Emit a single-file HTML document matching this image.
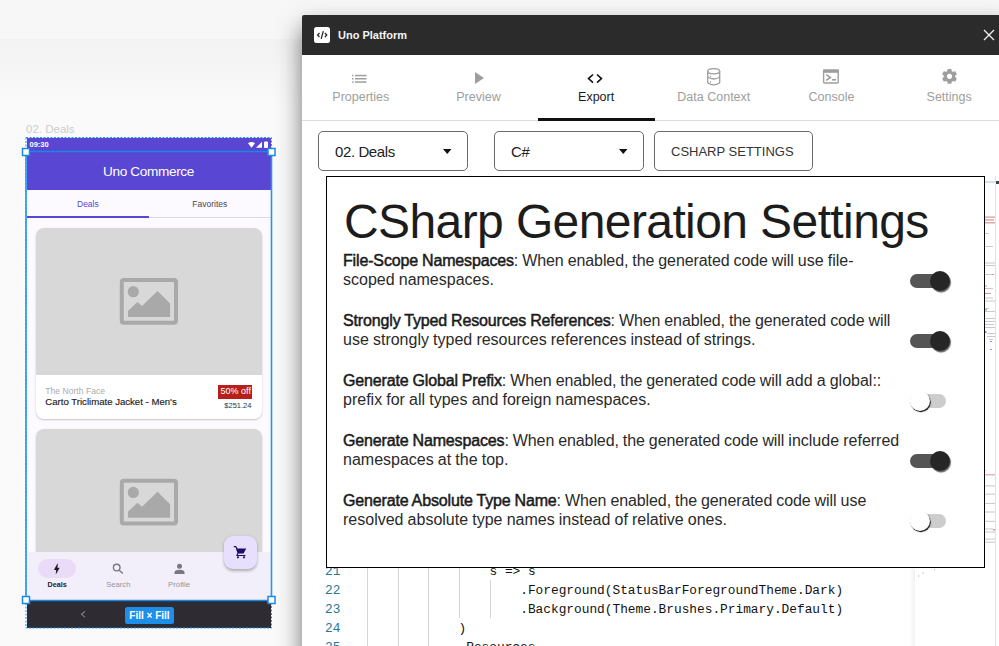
<!DOCTYPE html>
<html><head><meta charset="utf-8">
<style>
*{margin:0;padding:0;box-sizing:border-box}
html,body{width:999px;height:646px;overflow:hidden;background:#fafafa;font-family:"Liberation Sans",sans-serif;position:relative}
.a{position:absolute}
.t{position:absolute;white-space:nowrap;line-height:1}
svg{position:absolute;overflow:visible}
#bgtop{left:0;top:0;width:999px;height:39px;background:#f7f7f7}
#bgband{left:0;top:39px;width:999px;height:65px;background:linear-gradient(#f2f2f2,#fafafa)}
/* phone */
#phone{left:27px;top:138px;width:244px;height:490px;background:#fcfaff;overflow:hidden}
.card{border-radius:8px;overflow:hidden;background:#fff;box-shadow:0 1px 2px rgba(0,0,0,.22)}
/* dialog */
#dlg{left:302px;top:15px;width:710px;height:660px;background:#fff;border-radius:2px 0 0 0;box-shadow:0 12px 24px rgba(0,0,0,.55)}
.tablbl{top:91.2px;font-size:12.5px;color:#9e9e9e;width:117.67px;text-align:center}
.dd{top:131px;height:40px;border:1px solid #6a6a6a;border-radius:5px;background:#fff}
#popup{left:326px;top:176px;width:659px;height:392px;background:#fff;border:1px solid #000}
#title{left:344px;top:197.8px;font-size:48px;letter-spacing:-0.6px;color:#1c1c1c}
.row{left:343px;font-size:16px;color:#2a2a2a;line-height:18.75px;white-space:nowrap;letter-spacing:0px;word-spacing:-0.3px}
.we{letter-spacing:-0.1px}
.row b{font-weight:normal;color:#1a1a1a;letter-spacing:-0.15px;word-spacing:-0.3px;-webkit-text-stroke:0.5px #1a1a1a}
.tg{width:42px;height:22px}
.trk{left:0;top:3px;width:36px;height:14px;border-radius:7px}
.thm{top:0;width:20px;height:20px;border-radius:50%}
.on .trk{background:#555}
.on .thm{left:20px;background:#262626;box-shadow:1px 1.5px 1px 0 rgba(0,0,0,.6)}
.off .trk{background:#cdcdcd}
.off .thm{left:0;background:#fff;box-shadow:0.8px 1.2px 0.8px 0 rgba(0,0,0,.9)}
.code{position:absolute;white-space:pre;font-family:"Liberation Mono",monospace;font-size:12.82px;color:#111;line-height:1}
.ln{color:#237893}
.guide{position:absolute;width:1px;background:#d6d6d6}
</style></head><body>
<div class="a" id="bgtop"></div>
<div class="a" id="bgband"></div>

<!-- ============ phone ============ -->
<div class="t" style="left:26px;top:124.3px;font-size:11.5px;color:#cdcdcd">02. Deals</div>
<div class="a" id="phone">
  <div class="a" style="left:0;top:0;width:244px;height:52px;background:#5946d2"></div>
  <div class="a" style="left:0;top:52px;width:244px;height:28px;background:#fcfaff;border-bottom:1px solid #dcd9e2"></div>
  <div class="a" style="left:0;top:78px;width:122px;height:2px;background:#5946d2"></div>
  <div class="a card" style="left:9px;top:90px;width:226px;height:191px">
    <div class="a" style="left:0;top:0;width:226px;height:147px;background:#d8d8d8"></div>
  </div>
  <div class="a card" style="left:9px;top:290.75px;width:226px;height:191px">
    <div class="a" style="left:0;top:0;width:226px;height:147px;background:#d8d8d8"></div>
  </div>
  <div class="a" style="left:0;top:414px;width:244px;height:48px;background:#f3effa"></div>
  <div class="a" style="left:11px;top:421px;width:38px;height:19px;border-radius:10px;background:#eadcf9"></div>
  <div class="a" style="left:197px;top:397.5px;width:33px;height:33px;border-radius:9px;background:#e7e0fc;box-shadow:0 1.5px 3px rgba(0,0,0,.28)"></div>
  <div class="a" style="left:0;top:462px;width:244px;height:28px;background:#2e2b33"></div>
  <div class="a" style="left:98px;top:469px;width:48.5px;height:16.5px;background:#1e8fe8;border-radius:2.5px"></div>
</div>
<!-- phone texts -->
<div class="t" style="left:29.5px;top:140.9px;font-size:7.5px;color:#fff;font-weight:bold">09:30</div>
<div class="t" style="left:103px;top:165px;font-size:13.6px;letter-spacing:-0.35px;color:#fff">Uno Commerce</div>
<div class="t" style="left:77px;top:199.8px;font-size:8.5px;color:#5946d2">Deals</div>
<div class="t" style="left:192.3px;top:200.3px;font-size:8.5px;color:#4a4650">Favorites</div>
<div class="t" style="left:45.3px;top:387px;font-size:8.6px;color:#ababab">The North Face</div>
<div class="t" style="left:45.3px;top:396.7px;font-size:9.6px;color:#1b1b1b;-webkit-text-stroke:0.15px #1b1b1b">Carto Triclimate Jacket - Men's</div>
<div class="a" style="left:218px;top:384.5px;width:34px;height:14.5px;background:#b71f1b"></div>
<div class="t" style="left:220.6px;top:387px;font-size:9px;color:#fff">50% off</div>
<div class="t" style="left:224.3px;top:401.6px;font-size:7.5px;color:#333">$251.24</div>
<div class="t" style="left:47.5px;top:581.4px;font-size:7.2px;font-weight:bold;color:#1f1c22">Deals</div>
<div class="t" style="left:106.3px;top:581.4px;font-size:7.6px;color:#97939c">Search</div>
<div class="t" style="left:168px;top:581.4px;font-size:7.8px;color:#97939c">Profile</div>
<div class="t" style="left:129.3px;top:611.1px;font-size:10px;font-weight:bold;color:#fff">Fill × Fill</div>
<!-- phone icons -->
<svg style="left:0;top:0" width="999" height="646">
  <!-- status -->
  <path d="M248 143.2 Q251.5 140.6 255 143.2 L251.5 147.8 Z" fill="#fff"/>
  <path d="M256 147.8 L262 141.8 L262 147.8 Z" fill="#fff"/>
  <rect x="264" y="141.5" width="4" height="6.5" rx="0.8" fill="#fff"/>
  <!-- image placeholders -->
  <g fill="#a9a9a9">
    <path fill-rule="evenodd" d="M123.8 278 H173.9 Q178 278 178 282 V320.8 Q178 324.8 173.9 324.8 H123.8 Q119.8 324.8 119.8 320.8 V282 Q119.8 278 123.8 278 Z M123.8 282 V320.8 H174 V282 Z"/>
    <circle cx="133.3" cy="291.7" r="5.6"/>
    <path d="M127.9 311 L137.5 301.9 L142 306.1 L157.5 291 L170.1 303.4 V316.9 H127.9 Z"/>
  </g>
  <g fill="#a9a9a9" transform="translate(0,200.75)">
    <path fill-rule="evenodd" d="M123.8 278 H173.9 Q178 278 178 282 V320.8 Q178 324.8 173.9 324.8 H123.8 Q119.8 324.8 119.8 320.8 V282 Q119.8 278 123.8 278 Z M123.8 282 V320.8 H174 V282 Z"/>
    <circle cx="133.3" cy="291.7" r="5.6"/>
    <path d="M127.9 311 L137.5 301.9 L142 306.1 L157.5 291 L170.1 303.4 V316.9 H127.9 Z"/>
  </g>
  <!-- cart -->
  <g fill="#1f0d68">
    <path d="M233.8 546 H236 L237.5 548.5 H246.2 L243.6 553.5 H238.6 L237.6 555 H245.5 V556 H236 L237.4 553 L235.5 547.3 H233.8 Z"/>
    <circle cx="238" cy="557.3" r="1.1"/><circle cx="244" cy="557.3" r="1.1"/>
  </g>
  <!-- bolt -->
  <path transform="translate(50.1 562.1) scale(0.56)" d="M11 21h-1l1-7H7.5c-.58 0-.57-.32-.38-.66.19-.34.05-.08.07-.12C8.48 10.94 10.42 7.54 13 3h1l-1 7h3.5c.49 0 .56.33.47.51l-.07.15C12.96 17.55 11 21 11 21z" fill="#1d1b20"/>
  <!-- search -->
  <g stroke="#7b7780" stroke-width="1.4" fill="none"><circle cx="116.7" cy="567.6" r="3.3"/><path d="M119.2 570.2 L122.8 573.6"/></g>
  <!-- profile -->
  <g fill="#7b7780"><circle cx="179.5" cy="566.3" r="2.5"/><path d="M174.5 573.9 V572.6 Q174.5 569.8 179.5 569.8 Q184.5 569.8 184.5 572.6 V573.9 Z"/></g>
  <!-- chevron -->
  <path d="M85 611.4 L81.5 614.3 L85 617.2" stroke="#8a8690" stroke-width="1.1" fill="none"/>
  <!-- selection -->
  <rect x="26" y="137.5" width="245.5" height="490.5" fill="none" stroke="#2196f3" stroke-width="1" stroke-dasharray="2 1.5"/>
  <path d="M26 152 V600 M271.5 152 V600" stroke="#2196f3" stroke-width="1.6"/>
  <path d="M26 151.5 H271.5 M26 600.5 H271.5" stroke="#1a88e0" stroke-width="1.3"/>
  <g fill="#fff" stroke="#1a8ae6" stroke-width="1.5">
    <rect x="22.5" y="148.5" width="7" height="7"/><rect x="268" y="148.5" width="7" height="7"/>
    <rect x="22.5" y="596.5" width="7" height="7"/><rect x="268" y="596.5" width="7" height="7"/>
  </g>
</svg>

<!-- ============ dialog ============ -->
<div class="a" id="dlg"></div>
<div class="a" style="left:302px;top:15px;width:697px;height:40px;background:#2b2b2b;border-radius:2px 0 0 0"></div>
<div class="a" style="left:314px;top:27px;width:16px;height:16px;background:#fff;border-radius:2.5px"></div>
<div class="t" style="left:338px;top:29.9px;font-size:11px;font-weight:bold;color:#f4f4f4">Uno Platform</div>
<div class="t tablbl" style="left:302px">Properties</div>
<div class="t tablbl" style="left:419.67px">Preview</div>
<div class="t tablbl" style="left:537.33px;color:#1a1a1a">Export</div>
<div class="t tablbl" style="left:655px">Data Context</div>
<div class="t tablbl" style="left:772.67px">Console</div>
<div class="t tablbl" style="left:890.33px">Settings</div>
<div class="a" style="left:302px;top:120px;width:697px;height:1px;background:#dedede"></div>
<div class="a" style="left:538px;top:118px;width:117px;height:2.5px;background:#111"></div>
<div class="a dd" style="left:318px;width:150px"></div>
<div class="a dd" style="left:494px;width:150px"></div>
<div class="a dd" style="left:654px;width:159px"></div>
<div class="t" style="left:335px;top:144.3px;font-size:15px;letter-spacing:-0.4px;color:#222">02. Deals</div>
<div class="t" style="left:511px;top:144.3px;font-size:15px;letter-spacing:-0.4px;color:#222">C#</div>
<div class="t" style="left:671px;top:144.6px;font-size:13px;color:#333">CSHARP SETTINGS</div>
<svg style="left:0;top:0" width="999" height="646">
  <!-- header icon glyph -->
  <g stroke="#2b2b2b" stroke-width="1.3" fill="none">
    <path d="M319.5 33 L317.6 35 L319.5 37"/><path d="M324.9 33 L326.8 35 L324.9 37"/><path d="M323.3 31.2 L321.2 38.8"/>
  </g>
  <!-- close -->
  <path d="M984 30 L994 40 M994 30 L984 40" stroke="#f0f0f0" stroke-width="1.3"/>
  <!-- list -->
  <g fill="#9e9e9e">
    <rect x="352" y="74.8" width="1.5" height="1.5"/><rect x="352" y="78" width="1.5" height="1.5"/><rect x="352" y="81.3" width="1.5" height="1.5"/>
    <rect x="355" y="74.8" width="11.5" height="1.5"/><rect x="355" y="78" width="11.5" height="1.5"/><rect x="355" y="81.3" width="11.5" height="1.5"/>
  </g>
  <!-- play -->
  <path d="M475 72 L484 78 L475 84 Z" fill="#9e9e9e"/>
  <!-- code -->
  <g stroke="#111" stroke-width="1.6" fill="none"><path d="M593 74.5 L588.5 78.6 L593 82.7"/><path d="M597 74.5 L601.5 78.6 L597 82.7"/></g>
  <!-- database -->
  <g stroke="#9e9e9e" stroke-width="1.3" fill="none">
    <ellipse cx="713.7" cy="71.3" rx="6" ry="2.6"/>
    <path d="M707.7 71.3 V82.7 Q713.7 87 719.7 82.7 V71.3"/>
    <path d="M707.7 77 Q713.7 81 719.7 77"/>
    <path d="M710 76.5 H711 M710 82 H711"/>
  </g>
  <!-- console -->
  <g fill="none" stroke="#9e9e9e" stroke-width="1.4"><rect x="823.6" y="70.2" width="14.6" height="12.8" rx="1"/></g>
  <rect x="823" y="69.5" width="16" height="3.3" fill="#9e9e9e"/>
  <path d="M826.2 74.6 L830.4 77.5 L826.2 80.4" stroke="#9e9e9e" stroke-width="1.6" fill="none"/>
  <rect x="832" y="79" width="4" height="1.6" fill="#9e9e9e"/>
  <!-- gear -->
  <g transform="translate(949.5 76.4)">
    <path fill="#9e9e9e" fill-rule="evenodd" d="M-1.8 -7.4 H1.8 L2.2 -5.3 L3.6 -4.5 L5.6 -5.3 L7.4 -2.2 L5.8 -0.9 V0.9 L7.4 2.2 L5.6 5.3 L3.6 4.5 L2.2 5.3 L1.8 7.4 H-1.8 L-2.2 5.3 L-3.6 4.5 L-5.6 5.3 L-7.4 2.2 L-5.8 0.9 V-0.9 L-7.4 -2.2 L-5.6 -5.3 L-3.6 -4.5 L-2.2 -5.3 Z M0 -2.6 A2.6 2.6 0 1 0 0.01 -2.6 Z"/>
  </g>
  <!-- dropdown arrows -->
  <path d="M443 149 H451.5 L447.25 154 Z" fill="#111"/>
  <path d="M619 149 H627.5 L623.25 154 Z" fill="#111"/>
</svg>

<!-- ============ code editor ============ -->
<div class="guide" style="left:366.5px;top:567px;height:79px"></div>
<div class="guide" style="left:397.5px;top:567px;height:79px"></div>
<div class="guide" style="left:428.3px;top:567px;height:79px"></div>
<div class="guide" style="left:458.5px;top:567px;height:51px"></div>
<div class="guide" style="left:489.5px;top:580px;height:38px"></div>
<div class="code ln" style="left:325px;top:566px">21</div>
<div class="code ln" style="left:325px;top:585px">22</div>
<div class="code ln" style="left:325px;top:603.5px">23</div>
<div class="code ln" style="left:325px;top:623px">24</div>
<div class="code ln" style="left:325px;top:642px">25</div>
<div class="code" style="left:489.5px;top:566px">s =&gt; s</div>
<div class="code" style="left:520.2px;top:585px">.Foreground(StatusBarForegroundTheme.Dark)</div>
<div class="code" style="left:520.2px;top:603.5px">.Background(Theme.Brushes.Primary.Default)</div>
<div class="code" style="left:458.5px;top:623px">)</div>
<div class="code" style="left:458.5px;top:642px">.Resources</div>
<div class="a" style="left:909px;top:568px;width:6px;height:78px;background:linear-gradient(90deg,rgba(0,0,0,0),rgba(0,0,0,.05))"></div>
<div class="a" style="left:995px;top:176px;width:1px;height:470px;background:#e2e2e2"></div>
<div class="a" style="left:985px;top:181px;width:10px;height:2px;background:#cfe1f7"></div>
<div class="a" style="left:996px;top:181px;width:3px;height:3px;background:#444"></div>

<svg style="left:0;top:0" width="999" height="646">
<g fill="#b03030" opacity=".5"><rect x="985" y="216.5" width="10" height="1.2"/><rect x="985" y="219.3" width="9" height="1.2"/><rect x="985" y="222.2" width="10" height="1.2"/><rect x="985" y="285.5" width="2" height="1"/><rect x="985" y="293" width="6" height="1"/><rect x="985" y="474.3" width="10" height="1"/><rect x="992" y="274" width="2" height="1"/><rect x="993" y="529" width="2" height="1.5"/></g>
<g fill="#888" opacity=".45"><rect x="985" y="233" width="4" height="1"/><rect x="985" y="246" width="8" height="1"/><rect x="985" y="262.5" width="10" height="1"/><rect x="985" y="265" width="10" height="1"/><rect x="985" y="274" width="7" height="1"/><rect x="985" y="288" width="8" height="1"/><rect x="985" y="297.5" width="8" height="1"/><rect x="985" y="300.5" width="10" height="1"/><rect x="985" y="308" width="4" height="1"/><rect x="985" y="311" width="10" height="1"/><rect x="985" y="318" width="10" height="1"/><rect x="985" y="321" width="10" height="1"/><rect x="985" y="324" width="9" height="1"/><rect x="985" y="327" width="10" height="1"/><rect x="987" y="333" width="8" height="1"/><rect x="987" y="336" width="8" height="1"/><rect x="989" y="339" width="4" height="1"/><rect x="985" y="470" width="1" height="1"/><rect x="985" y="485.4" width="10" height="1"/><rect x="985" y="493.7" width="10" height="1"/><rect x="985" y="503" width="10" height="1"/><rect x="985" y="511.5" width="10" height="1"/><rect x="985" y="520.8" width="10" height="1"/><rect x="985" y="528.5" width="8" height="1"/><rect x="985" y="531.5" width="10" height="1"/><rect x="985" y="538.6" width="10" height="1"/><rect x="985" y="541.7" width="10" height="1"/><rect x="922.5" y="572" width="1" height="2"/><rect x="918" y="575" width="1" height="2"/><rect x="934" y="569" width="1" height="1.5"/></g>
<g fill="#3050d0" opacity=".6"><rect x="985" y="331" width="1.5" height="2"/><rect x="990" y="341" width="2" height="1"/><rect x="990" y="349" width="2" height="1"/></g>
<g fill="#30a060" opacity=".6"><rect x="985" y="309" width="2" height="1.5"/></g>
</svg>
<!-- ============ popup ============ -->
<div class="a" id="popup"></div>
<div class="t" id="title">CSharp Generation Settings</div>
<div class="a row" style="top:252px"><b>File-Scope Namespaces</b><span class="we">: When enabled, the generated code will</span> use file-<br>scoped namespaces.</div>
<div class="a row" style="top:312px"><b>Strongly Typed Resources References</b><span class="we">: When enabled, the generated code will</span><br>use strongly typed resources references instead of strings.</div>
<div class="a row" style="top:372px"><b>Generate Global Prefix</b><span class="we">: When enabled, the generated code will</span> add a global::<br>prefix for all types and foreign namespaces.</div>
<div class="a row" style="top:432px"><b>Generate Namespaces</b><span class="we">: When enabled, the generated code will</span> include referred<br>namespaces at the top.</div>
<div class="a row" style="top:492px"><b>Generate Absolute Type Name</b><span class="we">: When enabled, the generated code will</span> use<br>resolved absolute type names instead of relative ones.</div>
<div class="a tg on" style="left:910px;top:271px"><div class="a trk"></div><div class="a thm"></div></div>
<div class="a tg on" style="left:910px;top:331px"><div class="a trk"></div><div class="a thm"></div></div>
<div class="a tg off" style="left:910px;top:391px"><div class="a trk"></div><div class="a thm"></div></div>
<div class="a tg on" style="left:910px;top:451px"><div class="a trk"></div><div class="a thm"></div></div>
<div class="a tg off" style="left:910px;top:511px"><div class="a trk"></div><div class="a thm"></div></div>
</body></html>
